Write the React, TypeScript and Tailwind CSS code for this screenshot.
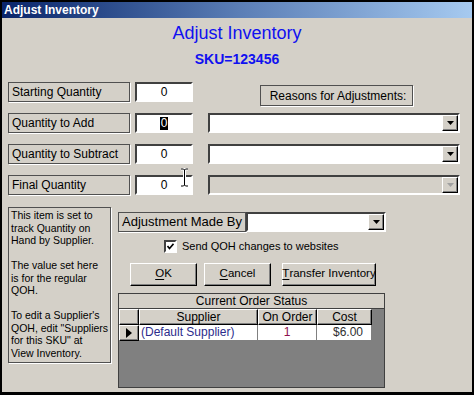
import React from "react";

const raised =
  "border border-t-white border-l-white border-b-black border-r-black shadow-[inset_-1px_-1px_0_#808080]";
const sunken =
  "border-2 border-t-[#404040] border-l-[#404040] border-b-white border-r-white";
const labelBox =
  "border border-[#505050] shadow-[1px_1px_0_#fff] bg-[#d4d0c8] flex items-center pl-[3px] text-[12px] text-black whitespace-nowrap";

function Arrow({ disabled }: { disabled?: boolean }) {
  return (
    <div className={`w-[16px] h-full flex items-center justify-center bg-[#d4d0c8] ${raised}`}>
      <svg width="7" height="4" viewBox="0 0 7 4">
        <polygon points="0,0 7,0 3.5,4" fill={disabled ? "#a0a0a0" : "#000"} />
      </svg>
    </div>
  );
}

function Combo({ width, disabled }: { width: string; disabled?: boolean }) {
  return (
    <div className={`${width} h-[20px] ${sunken} ${disabled ? "bg-[#d4d0c8]" : "bg-white"} flex justify-end`}>
      <Arrow disabled={disabled} />
    </div>
  );
}

function QtyRow({
  label,
  selected,
  combo,
  children,
}: {
  label: string;
  selected?: boolean;
  combo?: "on" | "off";
  children?: React.ReactNode;
}) {
  return (
    <div className="flex items-start h-[20px]">
      <div className={`w-[122px] h-[20px] ${labelBox}`}>{label}</div>
      <div className={`ml-[5px] w-[58px] h-[20px] ${sunken} bg-white flex items-center justify-center text-[12px]`}>
        {selected ? <span className="bg-black text-white px-[1px] leading-[13px]">0</span> : "0"}
      </div>
      {combo && (
        <div className="ml-[15px]">
          <Combo width="w-[252px]" disabled={combo === "off"} />
        </div>
      )}
      {children}
    </div>
  );
}

function Btn({ first, rest, width }: { first: string; rest: string; width: string }) {
  return (
    <div className={`${width} h-[23px] bg-[#d4d0c8] ${raised} flex items-center justify-center text-[11.5px] whitespace-nowrap`}>
      <span className="underline underline-offset-2">{first}</span>
      {rest}
    </div>
  );
}

export default function App() {
  return (
    <div className="w-[474px] h-[395px] bg-black pt-[2px] px-[2px] pb-[3px] flex flex-col font-['Liberation_Sans',Arial,sans-serif]">
      <div className="h-[16px] bg-gradient-to-r from-[#0a246a] via-[#5a7db5] to-[#a6caf0] text-white font-bold text-[12px] leading-[16px] pl-[2px]">
        Adjust Inventory
      </div>
      <div className="flex-1 bg-[#d4d0c8] relative flex flex-col">
        <div className="mt-[5px] text-center text-[18px] leading-[20px] text-[#1010f0]">Adjust Inventory</div>
        <div className="mt-[8px] text-center text-[14px] leading-[16px] font-bold text-[#1010f0]">SKU=123456</div>

        <div className="mt-[15px] ml-[6px] flex flex-col gap-[11px]">
          <QtyRow label="Starting Quantity">
            <div className={`ml-[67px] mt-[3px] w-[153px] h-[21px] ${labelBox} justify-center pl-0`}>
              Reasons for Adjustments:
            </div>
          </QtyRow>
          <QtyRow label="Quantity to Add" selected combo="on" />
          <QtyRow label="Quantity to Subtract" combo="on" />
          <QtyRow label="Final Quantity" combo="off" />
        </div>

        <div className="mt-[12px] ml-[6px] flex items-start">
          <div className="w-[103px] h-[156px] border border-[#505050] shadow-[1px_1px_0_#fff] pl-[2px] pt-[1px] text-[10.5px] leading-[12.5px] text-black whitespace-nowrap overflow-hidden">
            This item is set to<br />track Quantity on<br />Hand by Supplier.<br />
            <br />
            The value set here<br />is for the regular<br />QOH.<br />
            <br />
            To edit a Supplier's<br />QOH, edit "Suppliers<br />for this SKU" at<br />View Inventory.
          </div>

          <div className="ml-[7px] mt-[5px] flex flex-col">
            <div className="flex h-[20px]">
              <div className={`w-[128px] h-[20px] ${labelBox} text-[13px]`}>Adjustment Made By</div>
              <Combo width="w-[140px]" />
            </div>

            <div className="mt-[6px] ml-[46px] flex items-center gap-[5px] text-[11px]">
              <div className={`w-[13px] h-[13px] ${sunken} bg-white flex items-center justify-center`}>
                <svg width="7" height="7" viewBox="0 0 7 7">
                  <path d="M0.5 3 L2.5 5.5 L6.5 0.8" stroke="#000" strokeWidth="1.6" fill="none" />
                </svg>
              </div>
              <span>Send QOH changes to websites</span>
            </div>

            <div className="mt-[8px] ml-[12px] flex gap-[7px]">
              <Btn first="O" rest="K" width="w-[67px]" />
              <Btn first="C" rest="ancel" width="w-[67px]" />
              <div className="ml-[4px]">
                <Btn first="T" rest="ransfer Inventory" width="w-[94px]" />
              </div>
            </div>

            <div className="mt-[7px] w-[267px] h-[95px] border border-[#404040] bg-[#808080] flex flex-col text-[12px]">
              <div className="h-[15px] bg-[#d4d0c8] border-b border-[#404040] text-center leading-[14px]">
                Current Order Status
              </div>
              <div className="flex h-[16px]">
                <div className={`w-[20px] bg-[#d4d0c8] ${raised}`} />
                <div className={`w-[119px] bg-[#d4d0c8] ${raised} text-center leading-[14px]`}>Supplier</div>
                <div className={`w-[59px] bg-[#d4d0c8] ${raised} text-center leading-[14px]`}>On Order</div>
                <div className={`w-[55px] bg-[#d4d0c8] ${raised} text-center leading-[14px]`}>Cost</div>
              </div>
              <div className="flex h-[16px]">
                <div className={`w-[20px] bg-[#d4d0c8] ${raised} flex items-center justify-center`}>
                  <svg width="6" height="10" viewBox="0 0 6 10">
                    <polygon points="0,0 6,5 0,10" fill="#000" />
                  </svg>
                </div>
                <div className="w-[119px] bg-white border-r border-b border-[#808080] pl-[2px] leading-[15px] text-[#2c2c8c]">
                  (Default Supplier)
                </div>
                <div className="w-[59px] bg-white border-r border-b border-[#808080] text-center leading-[15px] text-[#8c1050]">
                  1
                </div>
                <div className="w-[55px] bg-white border-r border-b border-[#808080] text-right pr-[8px] leading-[15px] text-[#303030]">
                  $6.00
                </div>
              </div>
            </div>
          </div>
        </div>

        <svg className="absolute left-[178px] top-[150px]" width="9" height="19" viewBox="0 0 9 19">
          <path d="M1 1 H3.5 L4.5 2 L5.5 1 H8 M4.5 2 V17 M1 18 H3.5 L4.5 17 L5.5 18 H8" stroke="#fff" strokeWidth="3" fill="none" />
          <path d="M1 1 H3.5 L4.5 2 L5.5 1 H8 M4.5 2 V17 M1 18 H3.5 L4.5 17 L5.5 18 H8" stroke="#000" strokeWidth="1" fill="none" />
        </svg>
      </div>
    </div>
  );
}
